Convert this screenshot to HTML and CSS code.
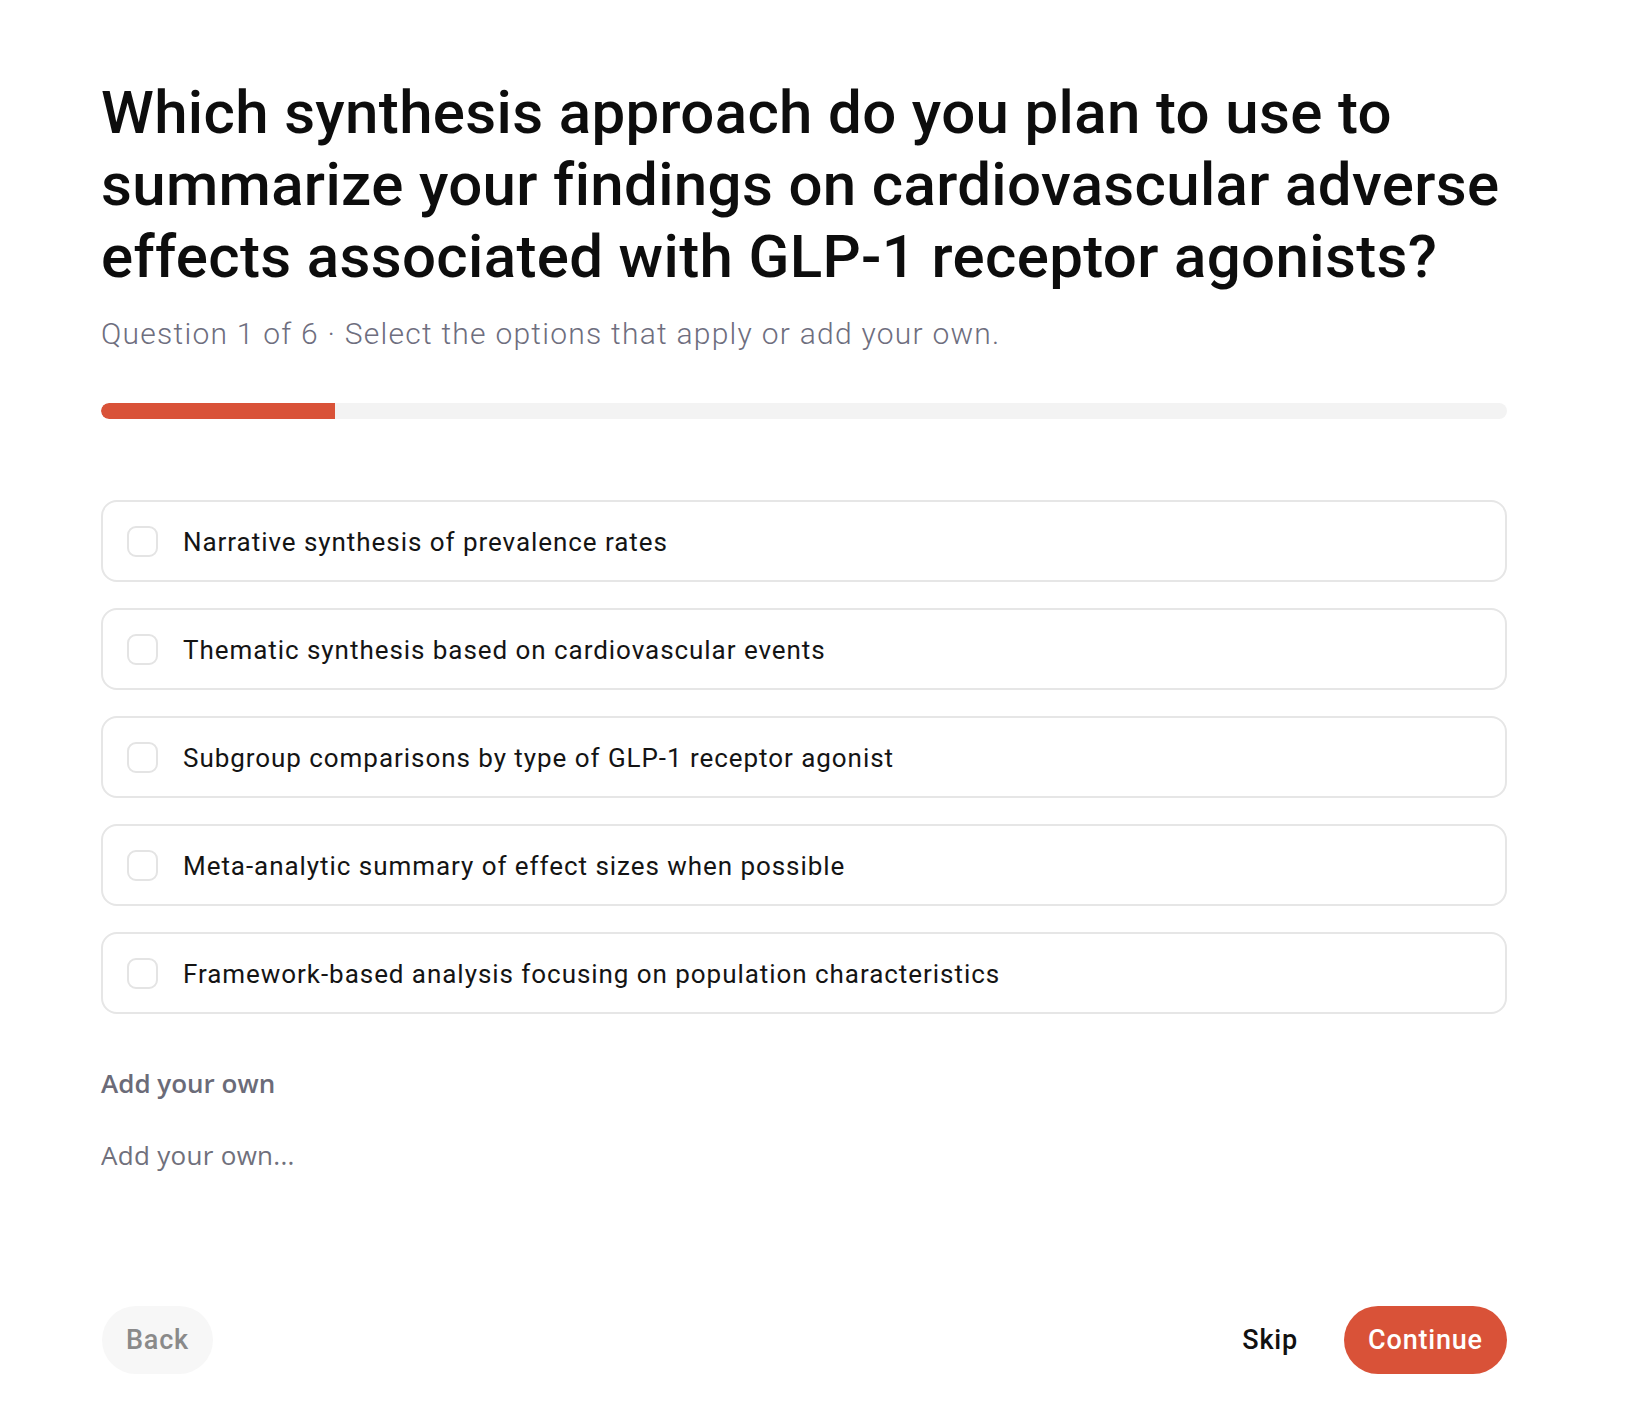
FILE: index.html
```html
<!DOCTYPE html>
<html lang="en">
<head>
<meta charset="utf-8">
<title>Question 1 of 6</title>
<link rel="stylesheet" href="styles.css">
</head>
<body>
<main class="survey">
  <h1 class="question">Which synthesis approach do you plan to use to summarize your findings on cardiovascular adverse effects associated with GLP-1 receptor agonists?</h1>
  <p class="hint">Question 1 of 6 · Select the options that apply or add your own.</p>
  <div class="progress"><div class="progress-fill" style="width: 16.67%"></div></div>

  <ul class="options">
    <li class="option"><span class="check"></span><span class="option-text">Narrative synthesis of prevalence rates</span></li>
    <li class="option"><span class="check"></span><span class="option-text">Thematic synthesis based on cardiovascular events</span></li>
    <li class="option"><span class="check"></span><span class="option-text">Subgroup comparisons by type of GLP-1 receptor agonist</span></li>
    <li class="option"><span class="check"></span><span class="option-text">Meta-analytic summary of effect sizes when possible</span></li>
    <li class="option"><span class="check"></span><span class="option-text">Framework-based analysis focusing on population characteristics</span></li>
  </ul>

  <label class="own-label" for="own">Add your own</label>
  <input class="own-input" id="own" type="text" placeholder="Add your own...">

  <div class="actions">
    <button class="btn btn-back" type="button">Back</button>
    <div class="actions-right">
      <button class="btn btn-skip" type="button">Skip</button>
      <button class="btn btn-continue" type="button">Continue</button>
    </div>
  </div>
</main>
</body>
</html>
```

FILE: styles.css
```css
* { box-sizing: border-box; }

html, body {
  margin: 0;
  padding: 0;
  background: #ffffff;
}

body {
  font-family: Roboto, "Noto Sans", sans-serif;
  color: #111111;
}

.survey {
  width: 1406px;
  margin-left: 101px;
  padding-top: 77px;
  display: flex;
  flex-direction: column;
}

.question {
  margin: 0;
  font-size: 60px;
  line-height: 72px;
  font-weight: 500;
  color: #0d0d0d;
  letter-spacing: 0.35px;
}

.hint {
  margin: 21px 0 0;
  font-size: 30px;
  line-height: 40px;
  font-weight: 300;
  color: #6e6e7e;
  letter-spacing: 1.25px;
}

.progress {
  margin-top: 49px;
  height: 16px;
  border-radius: 8px;
  background: #f3f3f3;
  overflow: hidden;
}

.progress-fill {
  height: 100%;
  background: #d95238;
  border-radius: 8px 0 0 8px;
}

.options {
  list-style: none;
  margin: 81px 0 0;
  padding: 0;
  display: flex;
  flex-direction: column;
  gap: 26px;
}

.option {
  height: 82px;
  border: 2px solid #e6e6e6;
  border-radius: 16px;
  display: flex;
  align-items: center;
  padding: 0 24px;
  gap: 25px;
}

.check {
  width: 31px;
  height: 31px;
  border: 2px solid #e4e4e4;
  border-radius: 9px;
  flex: none;
}

.option-text {
  font-size: 26px;
  line-height: 36px;
  color: #141414;
  letter-spacing: 0.95px;
  padding-top: 2px;
}

.own-label {
  margin-top: 52px;
  font-family: "Open Sans", sans-serif;
  font-size: 26px;
  line-height: 34px;
  font-weight: 600;
  color: #6b6b78;
}

.own-input {
  margin-top: 38px;
  border: none;
  outline: none;
  padding: 0;
  font-family: "Open Sans", sans-serif;
  font-size: 26px;
  line-height: 34px;
  height: 34px;
  color: #222;
  background: transparent;
  letter-spacing: 0.3px;
}

.own-input::placeholder {
  color: #70707c;
}

.actions {
  margin-top: 134px;
  display: flex;
  justify-content: space-between;
  align-items: center;
}

.actions-right {
  display: flex;
  align-items: center;
  gap: 22px;
}

.btn {
  font-family: Roboto, "Noto Sans", sans-serif;
  font-size: 27px;
  font-weight: 500;
  height: 68px;
  border: none;
  border-radius: 34px;
  padding: 0 20px;
  cursor: pointer;
  letter-spacing: 0.8px;
}

.btn-back {
  width: 111px;
  margin-left: 1px;
  background: #f7f7f7;
  color: #8a8a8a;
}

.btn-skip {
  background: transparent;
  color: #111;
  padding: 0 24px;
}

.btn-continue {
  width: 163px;
  background: #d95238;
  color: #ffffff;
}
```
